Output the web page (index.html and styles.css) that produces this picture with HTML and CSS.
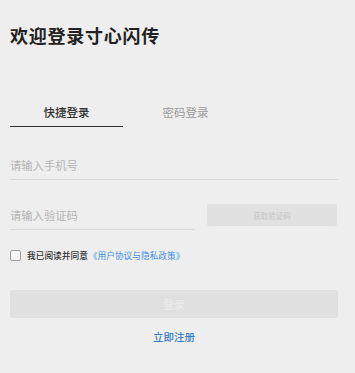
FILE: index.html
```html
<!DOCTYPE html>
<html lang="zh-CN">
<head>
<meta charset="utf-8">
<title>登录</title>
<link rel="stylesheet" href="styles.css">
</head>
<body>
<main class="page">
  <h1 class="title">欢迎登录寸心闪传</h1>
  <nav class="tabs">
    <div class="tab tab-active">快捷登录</div>
    <div class="tab">密码登录</div>
  </nav>
  <div class="field">
    <input class="input" type="text" placeholder="请输入手机号">
  </div>
  <div class="code-row">
    <div class="field field-code">
      <input class="input" type="text" placeholder="请输入验证码">
    </div>
    <button class="code-btn" type="button">获取验证码</button>
  </div>
  <label class="agree">
    <input class="check" type="checkbox">
    <span class="agree-text">我已阅读并同意</span>
    <span class="agree-link">《用户协议与隐私政策》</span>
  </label>
  <button class="login-btn" type="button">登录</button>
  <div class="register">立即注册</div>
</main>
</body>
</html>
```
FILE: styles.css
```css
html, body {
  margin: 0;
  padding: 0;
  background: #eeeeee;
}
body {
  font-family: "Noto Sans CJK SC", "Noto Sans", sans-serif;
  color: #333;
}
.page {
  width: 328px;
  padding: 24px 17px 0 10px;
  display: flex;
  flex-direction: column;
}
.title {
  margin: 0;
  font-size: 18px;
  line-height: 23px;
  font-weight: 700;
  letter-spacing: 0.75px;
  color: #222;
}
.tabs {
  display: flex;
  margin-top: 57px;
}
.tab {
  width: 113px;
  box-sizing: border-box;
  text-align: center;
  font-size: 11.5px;
  line-height: 16px;
  padding-bottom: 6px;
  color: #9a9a9a;
  border-bottom: 1.5px solid transparent;
}
.tab + .tab {
  margin-left: 6px;
}
.tab-active {
  color: #333;
  font-weight: 500;
  border-bottom-color: #333;
}
.field {
  margin-top: 29.5px;
  border-bottom: 1px solid #dadada;
  padding-bottom: 6px;
}
.input {
  display: block;
  width: 100%;
  margin: 0;
  padding: 0;
  border: 0;
  outline: none;
  background: transparent;
  font-family: inherit;
  font-size: 11.3px;
  line-height: 16px;
  height: 16px;
  color: #333;
}
.input::placeholder {
  color: #b4b4b4;
}
.code-row {
  display: flex;
  align-items: flex-end;
  margin-top: 24.5px;
}
.code-row .field {
  margin-top: 0;
}
.field-code {
  width: 185px;
}
.code-btn {
  margin: 0 0 4px 12px;
  width: 130px;
  height: 22px;
  border: 0;
  border-radius: 2px;
  background: #e1e1e1;
  color: #c4c4c4;
  font-family: inherit;
  font-size: 7.5px;
  padding: 0;
}
.agree {
  display: flex;
  align-items: center;
  margin-top: 19.5px;
  height: 11px;
}
.check {
  appearance: none;
  -webkit-appearance: none;
  margin: 0 6px 0 0;
  width: 11px;
  height: 11px;
  box-sizing: border-box;
  border: 1px solid #9c9c9c;
  border-radius: 2px;
  background: #f6f6f6;
}
.agree-text {
  font-size: 8.7px;
  color: #333;
  font-weight: 500;
}
.agree-link {
  font-size: 8.7px;
  color: #3f8fe0;
  margin-left: 1px;
}
.login-btn {
  margin-top: 29px;
  width: 328px;
  height: 28px;
  border: 0;
  border-radius: 2px;
  background: #e0e0e0;
  color: #ececec;
  font-family: inherit;
  font-size: 11px;
  padding: 0;
}
.register {
  margin-top: 11px;
  text-align: center;
  font-size: 10.5px;
  line-height: 16px;
  color: #3a7fc4;
  font-weight: 500;
}
```
